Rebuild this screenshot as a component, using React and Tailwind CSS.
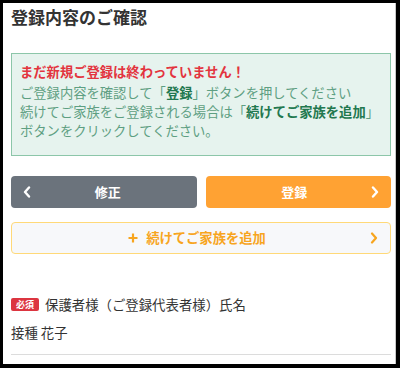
export default function App() {
  const font = { fontFamily: '"Noto Sans CJK JP", "Noto Sans", sans-serif' };
  return (
    <div className="w-[400px] h-[370px] bg-white" style={font}>
      <div className="w-[400px] h-[368px] border-l-[3px] border-t-[3px] border-r-[4px] border-b-[4px] border-black">
        <div className="h-full border-r border-[#c8c8c8] pl-[8px] pr-[4px] text-[#333]">
          <div className="pt-[2px] text-[17px] leading-[24px] font-bold text-[#333]">登録内容のご確認</div>
          <div className="mt-[24px] border border-[#8cc6a9] bg-[#e6f3ee] pt-[8px] pb-[15px] pl-[8px] pr-2 text-[13.3px] leading-[19px] text-[#5e9f82] whitespace-nowrap">
            <div className="font-bold text-[#e3343e] mb-[2px]">まだ新規ご登録は終わっていません！</div>
            <div>ご登録内容を確認して「<span className="font-bold text-[#22784f]">登録</span>」ボタンを押してください</div>
            <div>続けてご家族をご登録される場合は「<span className="font-bold text-[#22784f]">続けてご家族を追加</span>」</div>
            <div>ボタンをクリックしてください。</div>
          </div>
          <div className="mt-[20px] flex gap-[9px]">
            <button className="flex-1 h-[32px] rounded-[4px] bg-[#6b737c] flex items-center px-3 text-white">
              <svg width="8" height="12" viewBox="0 0 8 12" fill="none">
                <path d="M6 1.5 L2 6 L6 10.5" stroke="white" strokeWidth="2.4" strokeLinecap="round" strokeLinejoin="round" />
              </svg>
              <span className="flex-1 text-center text-[13px] font-bold">修正</span>
            </button>
            <button className="flex-1 h-[32px] rounded-[4px] bg-[#ffa233] flex items-center px-3 text-white">
              <span className="flex-1 text-center text-[13px] font-bold">登録</span>
              <svg width="8" height="12" viewBox="0 0 8 12" fill="none">
                <path d="M2 1.5 L6 6 L2 10.5" stroke="white" strokeWidth="2.4" strokeLinecap="round" strokeLinejoin="round" />
              </svg>
            </button>
          </div>
          <button className="mt-[14px] w-full h-[32px] rounded-[4px] border border-[#ffd978] bg-[#f7f8fa] flex items-center px-3 text-[#f7a51e]">
            <span className="flex-1 flex items-center justify-center gap-[8px] text-[13.3px] font-bold">
              <svg width="10" height="10" viewBox="0 0 10 10" fill="none">
                <path d="M5 0.5 V9.5 M0.5 5 H9.5" stroke="#f7a51e" strokeWidth="2.2" />
              </svg>
              続けてご家族を追加
            </span>
            <svg width="8" height="12" viewBox="0 0 8 12" fill="none">
              <path d="M2 1.5 L6 6 L2 10.5" stroke="#f7a51e" strokeWidth="2.2" strokeLinecap="round" strokeLinejoin="round" />
            </svg>
          </button>
          <div className="mt-[40px] flex items-center h-[20px]">
            <span className="w-[28px] h-[13px] rounded-[2px] bg-[#dc3540] text-white text-[9px] leading-[13px] font-bold text-center">必須</span>
            <span className="ml-[6px] text-[13.4px] leading-[20px] text-[#333]">保護者様（ご登録代表者様）氏名</span>
          </div>
          <div className="mt-[8px] text-[13.4px] leading-[20px] text-[#333]">接種 花子</div>
          <div className="mt-[12px] border-t border-[#dcdcdc]"></div>
        </div>
      </div>
    </div>
  );
}
